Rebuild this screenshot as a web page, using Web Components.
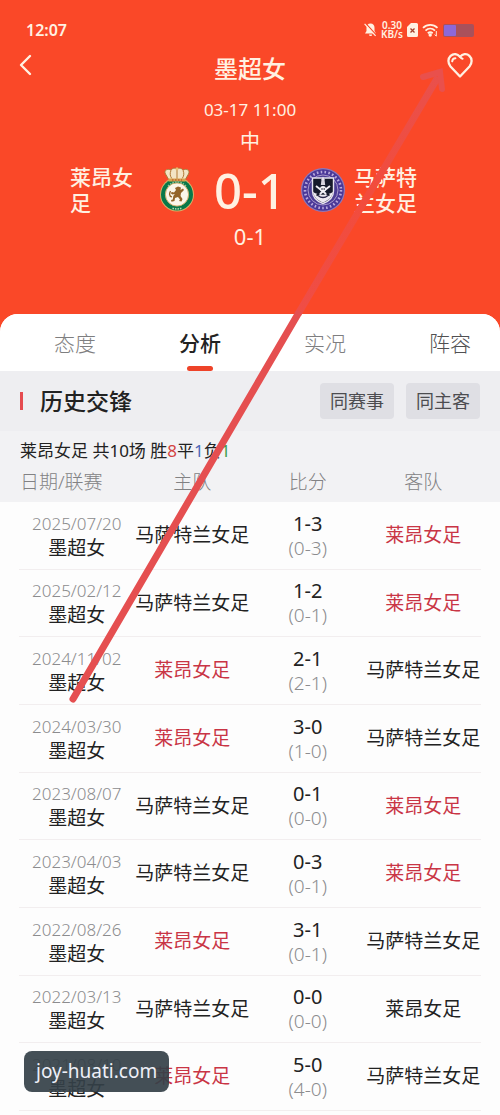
<!DOCTYPE html>
<html lang="zh-CN">
<head>
<meta charset="utf-8">
<meta name="viewport" content="width=device-width, initial-scale=1">
<title>墨超女</title>
<style>
  body {
    margin: 0;
    background: #fdfdfd;
    color: #222;
    font-family: "Noto Sans", "Noto Sans CJK SC", sans-serif;
  }
</style>
</head>
<body>
<match-page>
  <match-header slot="header" name="墨超女" time="03-17 11:00" venue="中" score="0-1" half="0-1">
    <status-bar slot="status"></status-bar>
    <span slot="home">莱昂女足</span>
    <crest-leon slot="home-crest"></crest-leon>
    <crest-mazatlan slot="away-crest"></crest-mazatlan>
    <span slot="away">马萨特兰女足</span>
  </match-header>
  <tab-bar active="分析" tabs="态度,分析,实况,阵容"></tab-bar>
  <section-head>
    历史交锋
    <filter-button slot="actions">同赛事</filter-button>
    <filter-button slot="actions">同主客</filter-button>
  </section-head>
  <history-table></history-table>
  <swipe-arrow slot="overlay"></swipe-arrow>
  <site-mark slot="overlay">joy-huati.com</site-mark>
</match-page>

<script>
class MatchPage extends HTMLElement {
  connectedCallback() {
    this.attachShadow({ mode: 'open' });
    this.shadowRoot.innerHTML = `
      <style>
        :host {
          display: flex;
          flex-direction: column;
          position: relative;
          min-height: 100vh;
          overflow: hidden;
          background: #fa4828;
        }

        main {
          flex: 1;
          background: #fdfdfd;
          border-radius: 18px 18px 0 0;
          overflow: hidden;
        }
      </style>
      <slot name="header"></slot>
      <main><slot></slot></main>
      <slot name="overlay"></slot>
    `;
  }
}

class StatusBar extends HTMLElement {
  connectedCallback() {
    this.attachShadow({ mode: 'open' });
    this.shadowRoot.innerHTML = `
      <style>
        :host {
          display: flex;
          align-items: center;
          justify-content: space-between;
          padding: 18px 26px 0 26px;
          height: 24px;
          color: #fff1e2;
        }

        .time {
          font-size: 16px;
          font-weight: 600;
        }

        .icons {
          display: flex;
          align-items: center;
          gap: 4px;
        }

        .speed {
          font-size: 10px;
          line-height: 9px;
          font-weight: 600;
          text-align: center;
        }

        svg {
          display: block;
        }
      </style>
      <span class="time">12:07</span>
      <div class="icons">
        <svg width="13" height="14" viewBox="0 0 13 14" aria-hidden="true">
          <path d="M6.500 .6c-2.600 0-4 1.900-4 4.200V8L1 10.500h11L10.500 8V4.800c0-2.300-1.400-4.200-4-4.200z" fill="#fff1e2"/>
          <path d="M5 11.500h3.200a1.600 1.600 0 0 1-3.200 0z" fill="#fff1e2"/>
          <path d="M1.600 .4l11 12" stroke="#fa4828" stroke-width="1.300"/>
          <path d="M.6 .8l11 12" stroke="#fff1e2" stroke-width="1.200"/>
        </svg>
        <div class="speed">0.30<br>KB/s</div>
        <svg width="11" height="14" viewBox="0 0 11 14" aria-hidden="true">
          <path d="M4 0h5.500A1.500 1.500 0 0 1 11 1.500v11A1.500 1.500 0 0 1 9.500 14h-8A1.500 1.500 0 0 1 0 12.500V4z" fill="#fff1e2"/>
          <path d="M3.500 5.500l4 4m0-4l-4 4" stroke="#a4402c" stroke-width="1.300"/>
        </svg>
        <svg width="17" height="14" viewBox="0 0 17 14" aria-hidden="true" fill="none" stroke="#fff1e2" stroke-width="1.800">
          <path d="M1 4.800c4.200-4 10.300-4 14.500 0"/>
          <path d="M3.500 7.600c2.800-2.600 6.600-2.600 9.500 0"/>
          <path d="M5.800 10.300c1.500-1.300 3.400-1.300 4.900 0"/>
          <circle cx="8.200" cy="12" r=".8"/>
          <path d="M14.300 8v5M12.700 11.500l1.600 1.800" stroke-width="1"/>
        </svg>
        <svg width="31" height="13" viewBox="0 0 31 13" aria-hidden="true">
          <rect width="31" height="13" rx="2" fill="#a9515b"/>
          <rect x="1" y="1" width="12" height="11" rx="1" fill="#8c68d8"/>
        </svg>
      </div>
    `;
  }
}

class MatchHeader extends HTMLElement {
  connectedCallback() {
    const get = (name) => this.getAttribute(name);
    this.attachShadow({ mode: 'open' });
    this.shadowRoot.innerHTML = `
      <style>
        :host {
          display: block;
          padding-bottom: 65px;
          color: #fff1e2;
          text-align: center;
        }

        .nav {
          display: flex;
          align-items: center;
          justify-content: space-between;
          height: 46px;
          margin-top: 4px;
          padding: 0 18px;
        }

        button {
          display: block;
          width: 36px;
          margin-bottom: 8px;
          padding: 0;
          border: 0;
          background: none;
        }

        svg {
          display: block;
        }

        h1 {
          margin: 0;
          font-size: 24px;
          line-height: 32px;
          font-weight: 500;
        }

        .time {
          margin-top: 4px;
          font-size: 17px;
          line-height: 28px;
        }

        .venue {
          padding-top: 3px;
          font-size: 20px;
          line-height: 30px;
        }

        .teams {
          display: grid;
          grid-template-columns: 1fr 44px 102px 44px 1fr;
          align-items: center;
          height: 66px;
        }

        .team {
          width: 63px;
          font-size: 21px;
          line-height: 26px;
          font-weight: 500;
          text-align: left;
        }

        .home {
          justify-self: end;
          margin-right: 22px;
        }

        .away {
          margin-left: 9px;
        }

        .score {
          font-size: 49px;
          line-height: 60px;
          font-weight: 500;
        }

        .half {
          font-size: 22px;
          line-height: 26px;
        }
      </style>
      <slot name="status"></slot>
      <div class="nav">
        <button aria-label="返回">
          <svg width="16" height="22" viewBox="0 0 16 22" fill="none" stroke="#fff1e2" stroke-width="2.400" stroke-linecap="round" stroke-linejoin="round">
            <path d="M12 2L3 11l9 9"/>
          </svg>
        </button>
        <h1>${get('name')}</h1>
        <button aria-label="收藏">
          <svg width="28" height="26" viewBox="0 0 28 26" fill="none" stroke="#fff1e2" stroke-width="2.300" stroke-linecap="round" stroke-linejoin="round">
            <path d="M14 24.500L4.500 14.500C1.500 11 2 6.300 4.600 3.800 7.800 1 11.500 2 14 4.800c2.500-2.800 6.500-3.800 9.400-1 2.700 2.500 3.100 7.200.1 10.700z"/>
            <path d="M6.200 9.300c.2-1.900 1.400-3 3.200-3.100" stroke-width="2"/>
            <path d="M14 4.800c.8 1 1.500 1.600 2.600 1.900" stroke-width="2"/>
          </svg>
        </button>
      </div>
      <div class="time">${get('time')}</div>
      <div class="venue">${get('venue')}</div>
      <div class="teams">
        <div class="team home"><slot name="home"></slot></div>
        <slot name="home-crest"></slot>
        <div class="score">${get('score')}</div>
        <slot name="away-crest"></slot>
        <div class="team away"><slot name="away"></slot></div>
      </div>
      <div class="half">${get('half')}</div>
    `;
  }
}

class CrestLeon extends HTMLElement {
  connectedCallback() {
    this.attachShadow({ mode: 'open' });
    this.shadowRoot.innerHTML = `
      <style>
        :host { display: block; }
        svg { display: block; margin: 0 auto; }
      </style>
      <svg width="36" height="46" viewBox="0 0 36 46" role="img" aria-label="莱昂">
        <circle cx="18" cy="27.500" r="17" fill="#d9b36a"/>
        <circle cx="18" cy="27.500" r="16" fill="#08784a"/>
        <circle cx="18" cy="27.500" r="11.600" fill="#fbf6ea" stroke="#cfae6c"/>
        <path d="M10 13L6.500 7C4.500 3.500 8.500 1 12 3.200 13.500.8 16 .8 18 2c2-1.200 4.500-1.200 6 1.200 3.500-2.200 7.500.3 5.500 3.800L26 13z" fill="#f3e4c4" stroke="#a77b38" stroke-width="1"/>
        <path d="M12 3.500c-1.500 3-.8 5.800.8 8M24 3.500c1.500 3 .8 5.800-.8 8M18 2v10" stroke="#b27833" stroke-width="1" fill="none"/>
        <path d="M9.500 11.500h17v3h-17z" fill="#d8a34c"/>
        <circle cx="18" cy="1.800" r="1.500" fill="#e4bd72"/>
        <path d="M13 13h10" stroke="#a73c2a" stroke-width="1.200" stroke-dasharray="1.500 1.500"/>
        <path d="M16 21l3-1.500 3 1-.5 2.500 2.500-1.500 1 1.500-3 3-.5 3 2 3-1 2.500-2.500-.5 1-1.500-2-2.500-3 1-.5 3-3 .8-.5-1.800 1.800-.5.5-3.500 1.500-2-2.500.5-1.800-1.500 1.500-1 2 .5 2-2.500z" fill="#936429"/>
        <path d="M13 30c-3.500-1-2.500-4-1.500-6" stroke="#936429" stroke-width="1.300" fill="none"/>
        <path d="M9 19c5-5.500 13-5.500 18 0" stroke="#8ec5a1" stroke-width="1.300" stroke-dasharray="1.500 1.200" fill="none"/>
        <path d="M13.500 41.300c3 .9 6 .9 9 0" stroke="#b8d7ac" stroke-width="1.500" stroke-dasharray="1.500 1" fill="none"/>
      </svg>
    `;
  }
}

class CrestMazatlan extends HTMLElement {
  connectedCallback() {
    this.attachShadow({ mode: 'open' });
    this.shadowRoot.innerHTML = `
      <style>
        :host { display: block; }
        svg { display: block; }
      </style>
      <svg width="44" height="46" viewBox="0 0 44 46" role="img" aria-label="马萨特兰">
        <circle cx="22" cy="23" r="22" fill="#8d78bb"/>
        <circle cx="22" cy="23" r="20.800" fill="#4a3898"/>
        <circle cx="22" cy="23" r="18" fill="none" stroke="#b9aadd" stroke-width="2.600" stroke-dasharray="1.600 2.300"/>
        <circle cx="22" cy="23" r="15" fill="#4c3c94" stroke="#a899cc" stroke-width="1"/>
        <path d="M11.500 11h21v13c0 7-5 10.500-10.500 12.500C16.500 34.500 11.500 31 11.500 24z" fill="#161a2b" stroke="#e6e3ef" stroke-width="1.400"/>
        <path d="M12 25c1 5.500 5 8.700 10 10.500 5-1.800 9-5 10-10.500-6 3.500-14 3.500-20 0z" fill="#eeeaf2"/>
        <path d="M15 19l14 11M29 19L15 30" stroke="#f2eff6" stroke-width="1.900"/>
        <path d="M15.500 28.500l3-2M28.500 28.500l-3-2" stroke="#161a2b" stroke-width="1.600"/>
        <path d="M20.500 12.500h3l.7 5.500h-4.400z" fill="#d7d4df"/>
        <path d="M22 9.500l1.800 3.500h-3.600z" fill="#e7e3ee"/>
        <circle cx="22" cy="22" r="3" fill="#f5f3f8"/>
        <circle cx="21" cy="22" r=".8" fill="#161a2b"/>
        <circle cx="23.200" cy="22" r=".8" fill="#161a2b"/>
        <path d="M17 28.500c3 2.500 7 2.500 10 0" stroke="#2a2748" stroke-width="1.500" fill="none"/>
      </svg>
    `;
  }
}

class TabBar extends HTMLElement {
  connectedCallback() {
    const active = this.getAttribute('active');
    const tabs = this.getAttribute('tabs').split(',');
    this.attachShadow({ mode: 'open' });
    this.shadowRoot.innerHTML = `
      <style>
        :host {
          display: block;
          background: #fff;
        }

        nav {
          display: flex;
          justify-content: space-between;
          padding: 0 29px 0 54px;
        }

        button {
          display: flex;
          flex-direction: column;
          align-items: center;
          justify-content: space-between;
          height: 57px;
          padding: 15px 0 0;
          border: 0;
          background: none;
          color: #7e7e80;
          font: inherit;
          font-size: 21px;
          font-weight: 300;
          line-height: 28px;
        }

        button:last-child {
          color: #505052;
        }

        button.active {
          color: #222;
          font-weight: 500;
        }

        .active::after {
          content: '';
          width: 26px;
          height: 5px;
          border-radius: 3px;
          background: #ee4329;
        }
      </style>
      <nav>
        ${tabs.map((tab) => `<button class="${tab === active ? 'active' : ''}">${tab}</button>`).join('')}
      </nav>
    `;
  }
}

class SectionHead extends HTMLElement {
  connectedCallback() {
    this.attachShadow({ mode: 'open' });
    this.shadowRoot.innerHTML = `
      <style>
        :host {
          display: flex;
          align-items: center;
          justify-content: space-between;
          height: 60px;
          padding: 0 20px;
          background: #eeeef1;
        }

        h2 {
          display: flex;
          align-items: center;
          gap: 17px;
          margin: 0;
          font-size: 23px;
          line-height: 32px;
          font-weight: 500;
        }

        h2::before {
          content: '';
          width: 3px;
          height: 18px;
          background: #e54b50;
        }

        .actions {
          display: flex;
          gap: 12px;
        }
      </style>
      <h2><slot></slot></h2>
      <div class="actions"><slot name="actions"></slot></div>
    `;
  }
}

class FilterButton extends HTMLElement {
  connectedCallback() {
    this.attachShadow({ mode: 'open' });
    this.shadowRoot.innerHTML = `
      <style>
        :host {
          display: block;
        }

        button {
          display: block;
          padding: 4px 10px;
          border: 0;
          border-radius: 4px;
          background: #dfdfe4;
          color: #4c4c50;
          font: inherit;
          font-size: 18px;
          line-height: 28px;
        }
      </style>
      <button><slot></slot></button>
    `;
  }
}

const LEON = '莱昂女足';
const MAZATLAN = '马萨特兰女足';

// date, home, score, half-time score, away, highlighted team
const matches = [
  ['2025/07/20', MAZATLAN, '1-3', '0-3', LEON, LEON],
  ['2025/02/12', MAZATLAN, '1-2', '0-1', LEON, LEON],
  ['2024/11/02', LEON, '2-1', '2-1', MAZATLAN, LEON],
  ['2024/03/30', LEON, '3-0', '1-0', MAZATLAN, LEON],
  ['2023/08/07', MAZATLAN, '0-1', '0-0', LEON, LEON],
  ['2023/04/03', MAZATLAN, '0-3', '0-1', LEON, LEON],
  ['2022/08/26', LEON, '3-1', '0-1', MAZATLAN, LEON],
  ['2022/03/13', MAZATLAN, '0-0', '0-0', LEON, ''],
  ['2021/08/10', LEON, '5-0', '4-0', MAZATLAN, LEON],
];

class HistoryTable extends HTMLElement {
  team(name, winner) {
    return `<td class="${name === winner ? 'win' : ''}">${name}</td>`;
  }

  row([date, home, score, half, away, winner]) {
    return `
      <tr>
        <td><span class="date">${date}</span>墨超女</td>
        ${this.team(home, winner)}
        <td><span class="score">${score}</span><span class="half">(${half})</span></td>
        ${this.team(away, winner)}
      </tr>
    `;
  }

  connectedCallback() {
    this.attachShadow({ mode: 'open' });
    this.shadowRoot.innerHTML = `
      <style>
        :host {
          display: block;
          background: linear-gradient(#f2f2f4 71px, #fdfdfd 71px);
        }

        p {
          margin: 0;
          padding: 8px 20px 0;
          font-size: 17px;
          line-height: 24px;
        }

        .won { color: #d4433f; }
        .drawn { color: #4c68b8; }
        .lost { color: #3f9c48; }

        .scroll {
          padding: 0 19px;
        }

        table {
          width: 100%;
          table-layout: fixed;
          border-collapse: separate;
          border-spacing: 0;
          font-size: 19px;
          line-height: 25px;
        }

        th, td {
          padding: 0;
          text-align: center;
          white-space: nowrap;
        }

        th {
          height: 39px;
          color: #828284;
          font-size: 19px;
          font-weight: 300;
        }

        th:first-child {
          padding-left: 1px;
          text-align: left;
        }

        td {
          height: 67px;
          border-bottom: 1px solid #f2eeef;
        }

        /* every third row is a pixel shorter */
        tbody tr:nth-child(3n + 2) td {
          height: 66px;
        }

        .date, .score, .half {
          display: block;
        }

        .date {
          color: #8c8c8e;
          font-size: 17px;
          font-weight: 300;
        }

        .score {
          font-size: 20px;
        }

        .half {
          color: #8c8c8e;
          font-weight: 300;
        }

        .win {
          color: #c93545;
        }
      </style>
      <p>莱昂女足 共10场 胜<span class="won">8</span>平<span class="drawn">1</span>负<span class="lost">1</span></p>
      <div class="scroll">
        <table>
          <thead>
            <tr><th>日期/联赛</th><th>主队</th><th>比分</th><th>客队</th></tr>
          </thead>
          <tbody>${matches.map((match) => this.row(match)).join('')}</tbody>
        </table>
      </div>
    `;
  }
}

class SwipeArrow extends HTMLElement {
  connectedCallback() {
    this.attachShadow({ mode: 'open' });
    this.shadowRoot.innerHTML = `
      <style>
        :host {
          position: absolute;
          top: 0;
          left: 0;
          pointer-events: none;
        }

        svg { display: block; }
      </style>
      <svg width="460" height="710" viewBox="0 0 460 710" fill="none" stroke-linecap="round" aria-hidden="true">
        <defs>
          <linearGradient id="fade" gradientUnits="userSpaceOnUse" x1="298" y1="314" x2="440" y2="75">
            <stop offset="0" stop-color="#ef4d46"/>
            <stop offset=".5" stop-color="#f24c3c"/>
            <stop offset="1" stop-color="#e9504c"/>
          </linearGradient>
        </defs>
        <path d="M298 314L438 77" stroke="url(#fade)" stroke-width="7" stroke-linecap="butt"/>
        <path d="M423 77l17-5 2 17" stroke="#e9504c" stroke-width="6"/>
        <path d="M73 699L298 314" stroke="#e54f50" stroke-width="7"/>
      </svg>
    `;
  }
}

class SiteMark extends HTMLElement {
  connectedCallback() {
    this.attachShadow({ mode: 'open' });
    this.shadowRoot.innerHTML = `
      <style>
        :host {
          position: absolute;
          bottom: 23px;
          left: 24px;
          padding: 6px 12px;
          border-radius: 8px;
          background: rgba(52, 64, 72, 0.92);
          color: #eef0f8;
          font-size: 19px;
          line-height: 29px;
        }
      </style>
      <slot></slot>
    `;
  }
}

customElements.define('match-page', MatchPage);
customElements.define('status-bar', StatusBar);
customElements.define('match-header', MatchHeader);
customElements.define('crest-leon', CrestLeon);
customElements.define('crest-mazatlan', CrestMazatlan);
customElements.define('tab-bar', TabBar);
customElements.define('section-head', SectionHead);
customElements.define('filter-button', FilterButton);
customElements.define('history-table', HistoryTable);
customElements.define('swipe-arrow', SwipeArrow);
customElements.define('site-mark', SiteMark);
</script>
</body>
</html>
